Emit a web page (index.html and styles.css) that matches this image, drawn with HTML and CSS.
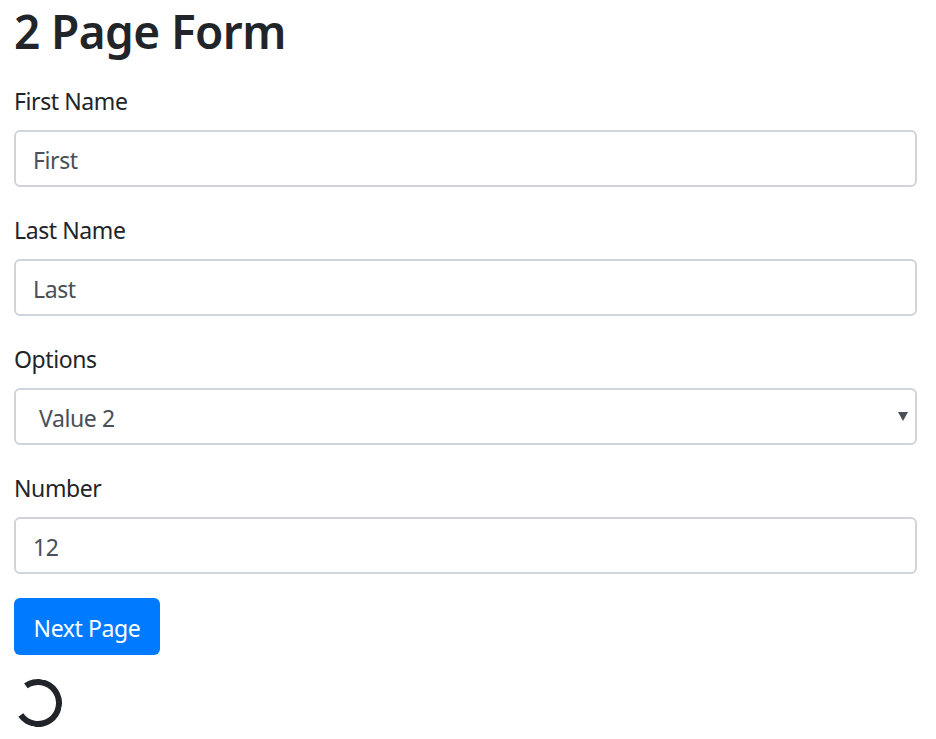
FILE: index.html
```html
<!DOCTYPE html>
<html lang="en">
<head>
    <meta charset="UTF-8">
    <meta name="viewport" content="width=device-width, initial-scale=1.0">
    <title>2 Page Form</title>
    <link rel="stylesheet" href="styles.css">
</head>
<body>
    <h1>2 Page Form</h1>
    <form>
        <div class="form-group">
            <label for="first">First Name</label>
            <input class="form-control" type="text" id="first" value="First">
        </div>
        <div class="form-group">
            <label for="last">Last Name</label>
            <input class="form-control" type="text" id="last" value="Last">
        </div>
        <div class="form-group">
            <label for="options">Options</label>
            <div class="select-wrap">
                <select class="form-control" id="options">
                    <option>Value 1</option>
                    <option selected>Value 2</option>
                </select>
                <span class="select-arrow"></span>
            </div>
        </div>
        <div class="form-group">
            <label for="number">Number</label>
            <input class="form-control" type="text" id="number" value="12">
        </div>
        <button type="button" class="btn">Next Page</button>
    </form>
    <div class="spinner"></div>
</body>
</html>
```
FILE: styles.css
```css
* {
    box-sizing: border-box;
}
body {
    font-family: 'Noto Sans', 'Open Sans', sans-serif;
    font-size: 23px;
    letter-spacing: -0.4px;
    color: #212529;
    background-color: white;
    margin: 0;
    padding: 0 19px 0 14px;
}
h1 {
    font-size: 46px;
    font-weight: 600;
    letter-spacing: -0.6px;
    line-height: 58px;
    margin: 2px 0 22px;
}
label {
    display: block;
    padding-top: 2px;
    line-height: 34px;
    margin-bottom: 12px;
}
.form-group {
    margin-bottom: 24px;
}
.form-control {
    display: block;
    width: 100%;
    height: 57px;
    padding: 2px 17px 0;
    font-family: inherit;
    font-size: inherit;
    letter-spacing: inherit;
    color: #495057;
    background-color: white;
    border: 2px solid #ced4da;
    border-radius: 6px;
    outline: none;
}
.select-wrap {
    position: relative;
}
select.form-control {
    appearance: none;
    padding-left: 23px;
}
.select-arrow {
    position: absolute;
    top: 24px;
    right: 9px;
    border-left: 5px solid transparent;
    border-right: 5px solid transparent;
    border-top: 9px solid #495057;
}
.btn {
    display: block;
    height: 57px;
    width: 146px;
    padding: 2px 0 0;
    font-family: inherit;
    font-size: inherit;
    letter-spacing: inherit;
    color: white;
    background-color: #007bff;
    border: none;
    border-radius: 6px;
}
.spinner {
    width: 48px;
    height: 48px;
    margin-top: 24px;
    border: 6px solid #212529;
    border-right-color: transparent;
    border-radius: 50%;
    transform: rotate(190deg);
}
```
